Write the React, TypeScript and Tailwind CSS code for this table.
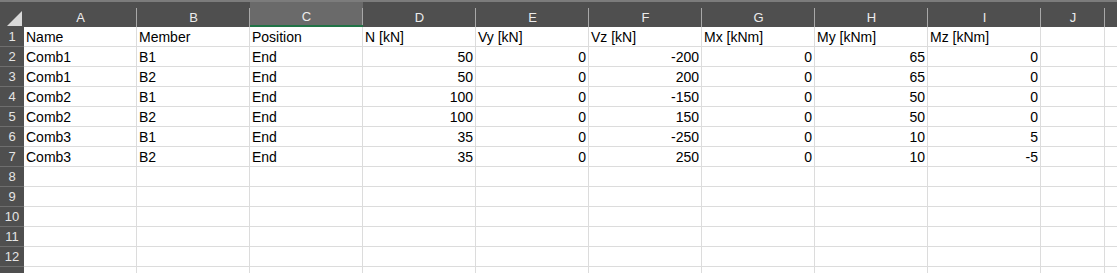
import React from "react";

const cols = ["A", "B", "C", "D", "E", "F", "G", "H", "I", "J"];

type Cell = { v: string; num?: boolean };

const rows: Cell[][] = [
  ["Name", "Member", "Position", "N [kN]", "Vy [kN]", "Vz [kN]", "Mx [kNm]", "My [kNm]", "Mz [kNm]"].map((v) => ({ v })),
  ...[
    ["Comb1", "B1", "End", "50", "0", "-200", "0", "65", "0"],
    ["Comb1", "B2", "End", "50", "0", "200", "0", "65", "0"],
    ["Comb2", "B1", "End", "100", "0", "-150", "0", "50", "0"],
    ["Comb2", "B2", "End", "100", "0", "150", "0", "50", "0"],
    ["Comb3", "B1", "End", "35", "0", "-250", "0", "10", "5"],
    ["Comb3", "B2", "End", "35", "0", "250", "0", "10", "-5"],
  ].map((r) => r.map((v, i) => ({ v, num: i > 2 }))),
];

const colW = (i: number) => (i < 9 ? "w-[113px]" : "w-[64px]");

export default function App() {
  const blank = 12 - rows.length;
  return (
    <div
      className="w-[1117px] h-[273px] overflow-hidden bg-white text-[14px] text-black"
      style={{ fontFamily: '"Liberation Sans", Arial, sans-serif' }}
    >
      {/* column headers */}
      <div className="flex h-[27px] bg-[#4f4f4f] border-t-2 border-[#7c7c7c]">
        <div className="w-[24px] shrink-0 relative">
          <svg className="absolute left-[7px] top-[9px]" width="15" height="15" viewBox="0 0 15 15">
            <polygon points="15,0 15,15 0,15" fill="#d9d9d9" />
          </svg>
        </div>
        {cols.map((c, i) => (
          <div
            key={c}
            className={`${colW(i)} shrink-0 relative flex items-center justify-center pt-[7px] text-[13px] text-[#ececec] ${
              c === "C" ? "bg-[#6a6a6a] border-b-2 border-[#217346]" : ""
            }`}
          >
            {c}
            <span className="absolute right-0 top-[6px] bottom-0 w-px bg-[#a8a8a8]" />
          </div>
        ))}
        <div className="flex-1" />
      </div>

      {rows.map((r, ri) => (
        <div key={ri} className="flex h-[20px]">
          <div className="w-[24px] shrink-0 bg-[#4f4f4f] border-b border-[#6e6e6e] flex items-center justify-center text-[13px] text-[#e4e4e4]">
            {ri + 1}
          </div>
          {cols.map((c, ci) => {
            const cell = r[ci];
            return (
              <div
                key={c}
                className={`${colW(ci)} shrink-0 border-r border-b border-[#dcdcdc] px-[2px] flex items-center leading-none whitespace-nowrap overflow-hidden ${
                  cell?.num ? "justify-end" : ""
                }`}
              >
                {cell?.v}
              </div>
            );
          })}
          <div className="flex-1 border-b border-[#dcdcdc]" />
        </div>
      ))}

      {Array.from({ length: blank + 1 }).map((_, bi) => (
        <div key={bi} className="flex h-[20px]">
          <div className="w-[24px] shrink-0 bg-[#4f4f4f] border-b border-[#6e6e6e] flex items-center justify-center text-[13px] text-[#e4e4e4]">
            {rows.length + bi + 1 <= 12 ? rows.length + bi + 1 : ""}
          </div>
          {cols.map((c, ci) => (
            <div key={c} className={`${colW(ci)} shrink-0 border-r border-b border-[#dcdcdc]`} />
          ))}
          <div className="flex-1 border-b border-[#dcdcdc]" />
        </div>
      ))}
    </div>
  );
}
